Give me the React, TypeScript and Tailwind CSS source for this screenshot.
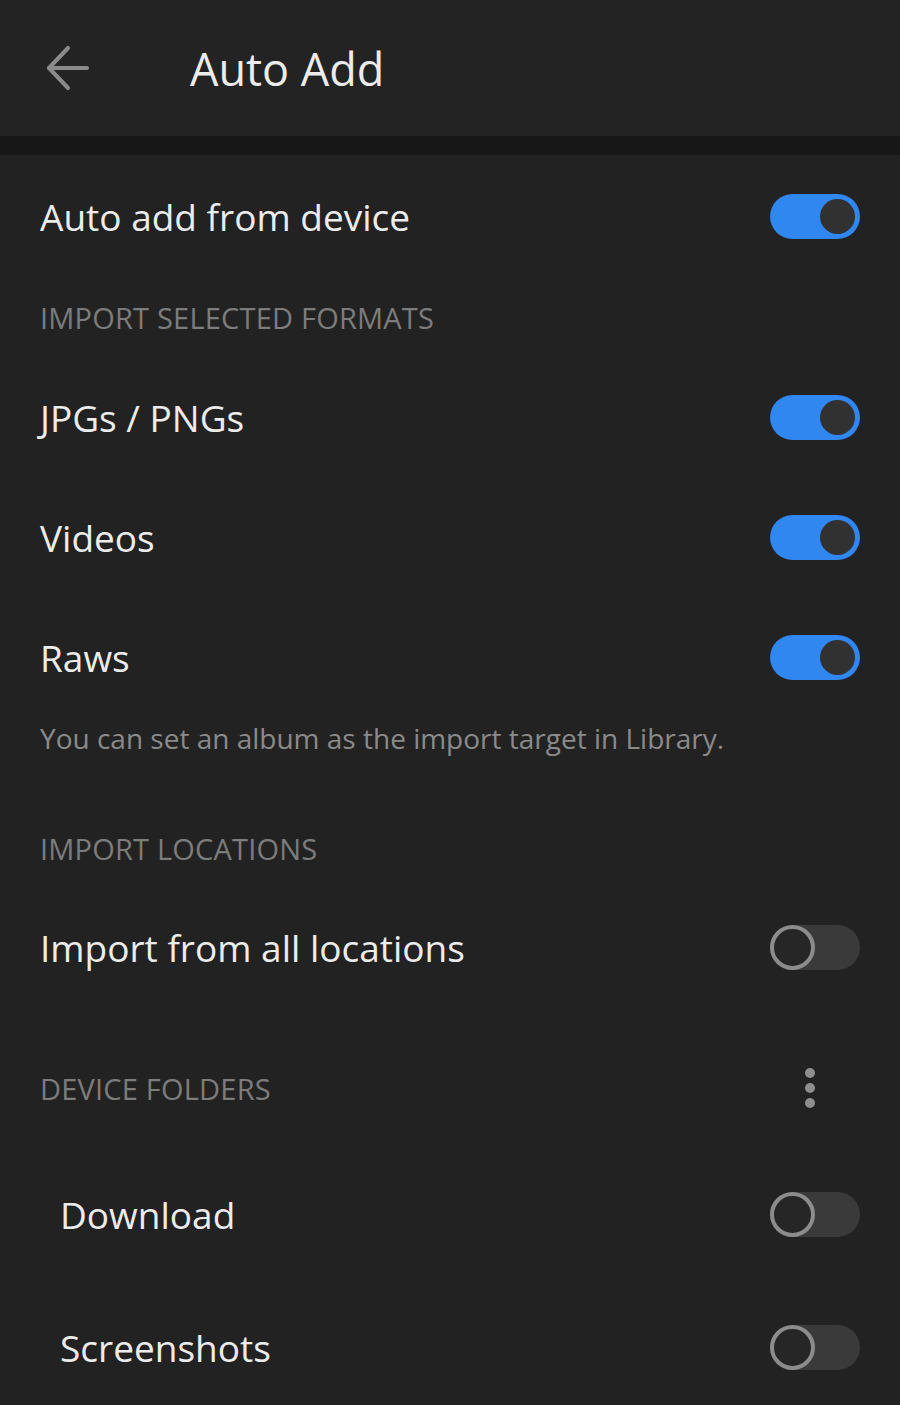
import React from "react";

const font = { fontFamily: '"Open Sans", "Noto Sans", sans-serif' };

function Toggle({ on }: { on: boolean }) {
  if (on) {
    return (
      <div className="flex h-[45px] w-[90px] shrink-0 items-center justify-end rounded-full bg-[#2f87ef] pr-[5px]">
        <div className="h-[35px] w-[35px] rounded-full bg-[#313131]" />
      </div>
    );
  }
  return (
    <div className="flex h-[45px] w-[90px] shrink-0 items-center rounded-full bg-[#3a3a3a]">
      <div className="h-[45px] w-[45px] rounded-full border-[4px] border-[#8c8c8c] bg-[#262626]" />
    </div>
  );
}

function Row({ label, on, h, indent, pt }: { label: string; on: boolean; h: string; indent?: boolean; pt?: string }) {
  return (
    <div className={`flex ${h} ${pt ?? ""} items-center justify-between pr-[40px] ${indent ? "pl-[60px]" : "pl-[40px]"}`}>
      <span className="text-[37px] leading-none text-[#ececec]">{label}</span>
      <Toggle on={on} />
    </div>
  );
}

export default function App() {
  return (
    <div className="flex min-h-[1405px] w-[900px] flex-col bg-[#222222]" style={font}>
      <div className="flex h-[136px] shrink-0 items-center bg-[#232323]">
        <div className="flex w-[190px] items-center pl-[46px]">
          <svg width="44" height="44" viewBox="0 0 44 44" fill="none" stroke="#8a8a8a" strokeWidth="4" strokeLinecap="round" strokeLinejoin="round">
            <path d="M3 22 H41" />
            <path d="M22 2 L3 22 L22 42" />
          </svg>
        </div>
        <span className="text-[45px] leading-none text-[#ececec]">Auto Add</span>
      </div>
      <div className="h-[19px] shrink-0 bg-[#171717]" />
      <Row label="Auto add from device" on h="h-[122px]" />
      <div className="flex h-[80px] items-center pl-[40px]">
        <span className="text-[29px] leading-none tracking-[0.2px] text-[#7c7c7c]">IMPORT SELECTED FORMATS</span>
      </div>
      <Row label="JPGs / PNGs" on h="h-[120px]" />
      <Row label="Videos" on h="h-[120px]" />
      <Row label="Raws" on h="h-[120px]" />
      <div className="flex h-[42px] items-center pl-[40px]">
        <span className="text-[28px] leading-none text-[#8a8a8a]">You can set an album as the import target in Library.</span>
      </div>
      <div className="flex h-[130px] items-center pl-[40px] pt-[48px]">
        <span className="text-[29px] leading-none tracking-[0.2px] text-[#7c7c7c]">IMPORT LOCATIONS</span>
      </div>
      <Row label="Import from all locations" on={false} h="h-[116px]" />
      <div className="flex h-[123px] items-center justify-between pl-[40px] pr-[85px] pt-[43px]">
        <span className="text-[29px] leading-none tracking-[0.2px] text-[#7c7c7c]">DEVICE FOLDERS</span>
        <div className="flex flex-col items-center gap-[5px]">
          <div className="h-[10px] w-[10px] rounded-full bg-[#8e8e8e]" />
          <div className="h-[10px] w-[10px] rounded-full bg-[#8e8e8e]" />
          <div className="h-[10px] w-[10px] rounded-full bg-[#8e8e8e]" />
        </div>
      </div>
      <Row label="Download" on={false} h="h-[152px]" pt="pt-[20px]" indent />
      <Row label="Screenshots" on={false} h="h-[134px]" indent />
    </div>
  );
}
